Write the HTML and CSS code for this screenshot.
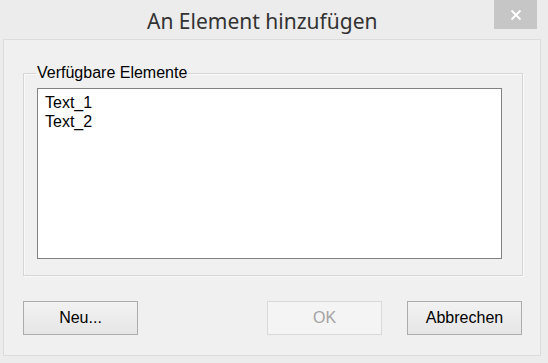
FILE: index.html
```html
<!DOCTYPE html>
<html lang="de">
<head>
<meta charset="utf-8">
<title>An Element hinzufügen</title>
<link rel="stylesheet" href="styles.css">
</head>
<body>
<div class="window">
  <div class="titlebar">
    <div class="title">An Element hinzufügen</div>
    <button class="close" aria-label="Schließen">
      <svg width="12" height="12" viewBox="0 0 12 12"><path d="M1.5 1.5 L10.5 10.5 M10.5 1.5 L1.5 10.5" stroke="#fff" stroke-width="1.8" fill="none"/></svg>
    </button>
  </div>
  <div class="panel">
    <fieldset class="group">
      <legend>Verfügbare Elemente</legend>
      <div class="listbox">
        <div class="item">Text_1</div>
        <div class="item">Text_2</div>
      </div>
    </fieldset>
    <div class="buttons">
      <button class="btn">Neu...</button>
      <div class="spacer"></div>
      <button class="btn disabled" disabled>OK</button>
      <button class="btn">Abbrechen</button>
    </div>
  </div>
</div>
</body>
</html>
```
FILE: styles.css
```css
html, body {
  margin: 0;
  padding: 0;
  background: #ececec;
}
.window {
  width: 548px;
  height: 363px;
  background: #ececec;
  display: flex;
  flex-direction: column;
  font-family: "Liberation Sans", Arial, sans-serif;
  font-size: 16px;
  color: #000;
}
.titlebar {
  height: 44px;
  display: flex;
  align-items: flex-start;
  padding-left: 147px;
  padding-right: 11px;
  box-sizing: border-box;
}
.title {
  font-family: "Noto Sans", "Open Sans", sans-serif;
  font-size: 21px;
  color: #333;
  margin-top: 7px;
  line-height: 28px;
}
.close {
  margin-left: auto;
  width: 43px;
  height: 29px;
  border: none;
  padding: 0;
  background: #c6c6c6;
  display: flex;
  align-items: center;
  justify-content: center;
}
.panel {
  flex: 1;
  margin: 0 7px 7px 3px;
  border: 1px solid #dcdcdc;
  background: #f0f0f0;
  display: flex;
  flex-direction: column;
  padding: 24px 18px 20px 19px;
}
.group {
  margin: 0;
  border: 1px solid #d5d5d5;
  box-shadow: inset 1px 1px 0 #fafafa, 1px 1px 0 #fafafa;
  padding: 6px 20px 16px 13px;
  width: 500px;
  box-sizing: border-box;
}
.group legend {
  padding: 0 1px;
  margin-left: -1px;
  line-height: 18px;
  color: #000;
}
.listbox {
  height: 165px;
  background: #fff;
  border: 1px solid #828282;
  padding: 4px 7px 0;
  line-height: 19px;
  box-sizing: content-box;
}
.buttons {
  margin-top: 25px;
  display: flex;
  gap: 25px;
}
.spacer {
  flex: 1;
}
.btn {
  width: 115px;
  height: 34px;
  font-family: "Liberation Sans", Arial, sans-serif;
  font-size: 16px;
  color: #000;
  border: 1px solid #acacac;
  background: linear-gradient(#f2f2f2, #e6e6e6);
  padding: 0;
}
.btn.disabled {
  color: #a3a3a3;
  border-color: #d9d9d9;
  background: #f4f4f4;
}
```
